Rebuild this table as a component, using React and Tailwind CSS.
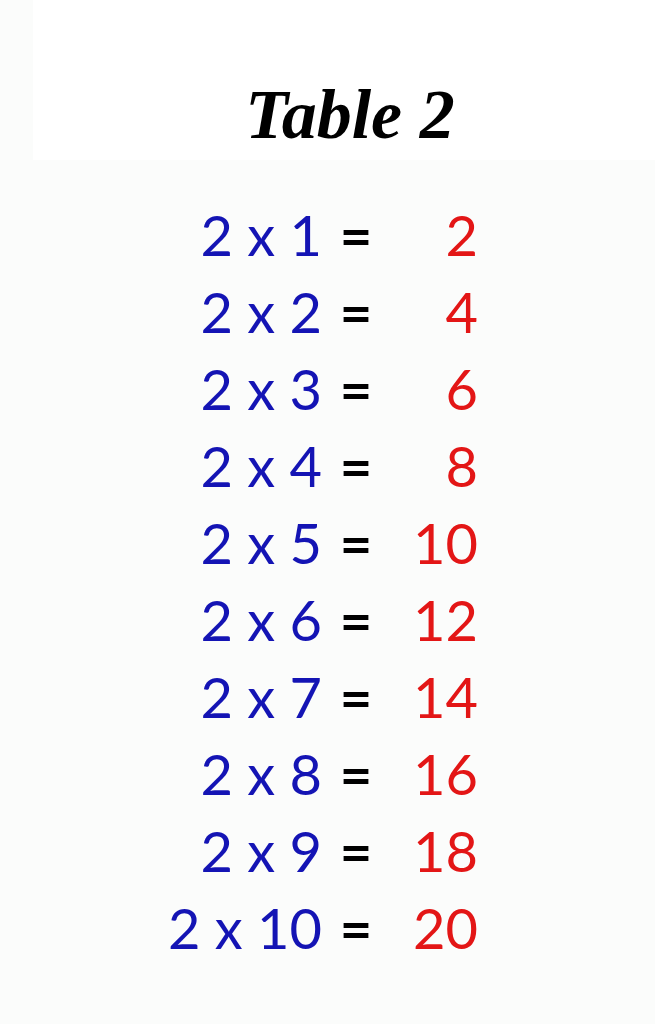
import React from 'react';

const rows = [1, 2, 3, 4, 5, 6, 7, 8, 9, 10];

export default function App() {
  return (
    <div className="min-h-screen w-[655px] bg-[#fbfcfb] overflow-hidden">
      <div className="ml-[33px] h-[160px] bg-white pt-[80px] pl-[12px] text-center">
        <h1
          className="text-[70px] leading-none font-bold italic text-black"
          style={{ fontFamily: '"Liberation Serif", "Times New Roman", serif' }}
        >
          Table 2
        </h1>
      </div>
      <div className="mt-[36px] flex flex-col" style={{ fontFamily: 'Lato, "Open Sans", sans-serif' }}>
        {rows.map((n) => (
          <div key={n} className="flex h-[77px] text-[56px] leading-[77px]">
            <div className="w-[322px] text-right text-[#1414b4]">2 x {n}</div>
            <div className="w-[68px] text-center font-bold text-black">=</div>
            <div className="w-[88px] text-right text-[#e31616]">{2 * n}</div>
          </div>
        ))}
      </div>
    </div>
  );
}
